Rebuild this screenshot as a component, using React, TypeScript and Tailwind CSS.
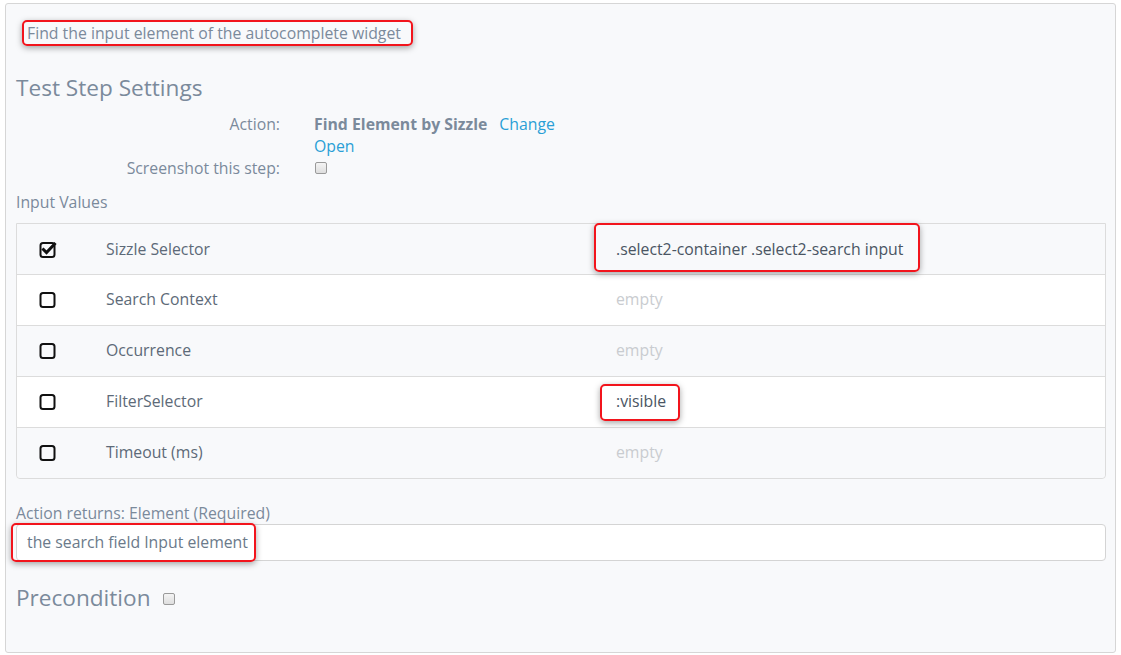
import React from 'react';

const font = { fontFamily: '"Open Sans", "Liberation Sans", sans-serif' };

function Mark({ children, className }: { children: React.ReactNode; className: string }) {
  // red annotation box drawn over the content
  return (
    <span className="relative inline-block">
      <span
        className={`pointer-events-none absolute rounded-[5px] border-2 border-[#f2141c] shadow-[0_2px_6px_rgba(0,0,0,0.35)] ${className}`}
      />
      {children}
    </span>
  );
}

function FaBox({ checked }: { checked: boolean }) {
  return (
    <svg width="18" height="18" viewBox="0 0 18 18" fill="none">
      <rect x="1.5" y="2" width="14" height="14" rx="2.5" stroke="#111" strokeWidth="2" />
      {checked && (
        <path d="M4.5 8.5 L7.5 11.5 L15.5 3" stroke="#111" strokeWidth="3" strokeLinecap="square" fill="none" />
      )}
    </svg>
  );
}

function SmallBox() {
  return (
    <span className="inline-block h-[12px] w-[12px] rounded-[2px] border border-[#9a9a9a] bg-gradient-to-b from-[#f4f4f4] to-[#dedede]" />
  );
}

type Row = { checked: boolean; name: string; value?: string; mark?: 'big' | 'small' };

const rows: Row[] = [
  { checked: true, name: 'Sizzle Selector', value: '.select2-container .select2-search input', mark: 'big' },
  { checked: false, name: 'Search Context' },
  { checked: false, name: 'Occurrence' },
  { checked: false, name: 'FilterSelector', value: ':visible', mark: 'small' },
  { checked: false, name: 'Timeout (ms)' },
];

export default function App() {
  return (
    <div className="min-h-[655px] bg-white pl-[5px] pr-[5px] pt-[3px]" style={font}>
      <div className="h-[650px] rounded-[3px] border border-[#d6d6d6] bg-[#f8f9fb] pl-[10px] pr-[9px] pt-[16px] text-[15.8px] text-[#7b8a9b]">
        <div className="h-[26px] pl-[11px] leading-[26px]">
          <Mark className="-left-[5px] -right-[12px] -top-[0px] -bottom-[0px]">
            <span>Find the input element of the autocomplete widget</span>
          </Mark>
        </div>

        <h2 className="mt-[27px] text-[22.6px] leading-[30px] text-[#7b8a9b]">Test Step Settings</h2>

        <div className="mt-[10px] flex leading-[22px]">
          <div className="w-[264px] text-right">Action:</div>
          <div className="ml-[34px]">
            <span className="font-bold">Find Element by Sizzle</span>
            <span className="ml-[12px] text-[#2a9fd6]">Change</span>
            <div className="text-[#2a9fd6]">Open</div>
          </div>
        </div>
        <div className="flex items-center leading-[22px]">
          <div className="w-[264px] text-right">Screenshot this step:</div>
          <div className="ml-[35px] flex items-center">
            <SmallBox />
          </div>
        </div>

        <div className="mt-[12px] leading-[22px]">Input Values</div>

        <div className="mt-[10px] rounded-b-[4px] border border-[#dcdcdc]">
          {rows.map((r, i) => (
            <div
              key={r.name}
              className={`flex items-center ${i > 0 ? 'h-[51px] border-t border-[#dcdcdc]' : 'h-[50px] pt-[1px]'} ${
                i % 2 === 0 ? 'bg-[#f8f9fb]' : 'bg-white'
              } ${i === rows.length - 1 ? 'rounded-b-[4px]' : ''}`}
            >
              <div className="flex w-[89px] pl-[22px]">
                <FaBox checked={r.checked} />
              </div>
              <div className="w-[510px] text-[#5d6a78]">{r.name}</div>
              <div className="flex-1">
                {r.value ? (
                  r.mark === 'big' ? (
                    <Mark className="-left-[22px] -right-[17px] -top-[15px] -bottom-[11px]">
                      <span className="text-[#4a5563]">{r.value}</span>
                    </Mark>
                  ) : (
                    <Mark className="-left-[16px] -right-[14px] -top-[6px] -bottom-[7px]">
                      <span className="text-[#4a5563]">{r.value}</span>
                    </Mark>
                  )
                ) : (
                  <span className="text-[#c9ccd0]">empty</span>
                )}
              </div>
            </div>
          ))}
        </div>

        <div className="mt-[24px] leading-[20px]">Action returns: Element (Required)</div>
        <div className="mt-[1px] flex h-[37px] items-center rounded-[4px] border border-[#d4d4d4] bg-white pl-[10px]">
          <Mark className="-left-[16px] -right-[8px] -top-[8px] -bottom-[8px]">
            <span className="text-[#6b7a8a]">the search field Input element</span>
          </Mark>
        </div>

        <div className="mt-[21px] flex items-center leading-[32px]">
          <span className="text-[22.6px]">Precondition</span>
          <span className="ml-[12px] mt-[2px] flex">
            <SmallBox />
          </span>
        </div>
      </div>
    </div>
  );
}
